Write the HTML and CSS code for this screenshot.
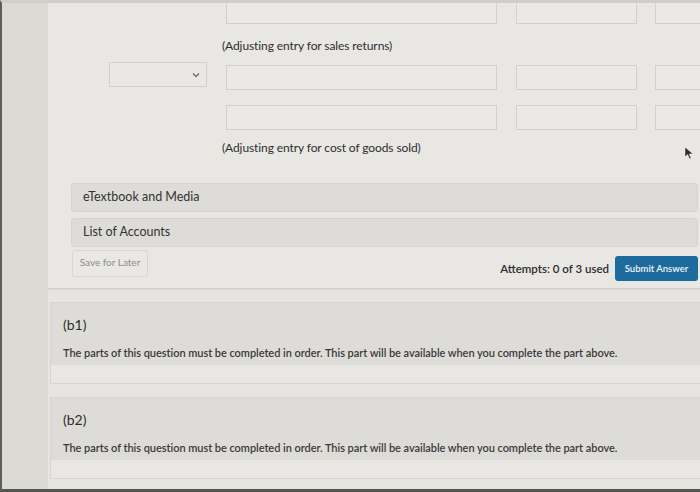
FILE: index.html
```html
<!DOCTYPE html>
<html lang="en">
<head>
<meta charset="utf-8">
<title>Question</title>
<link rel="stylesheet" href="styles.css">
</head>
<body>
<div class="screen">
  <div class="gutter"></div>
  <div class="main">
    <section class="question">
      <div class="journal">
        <div class="jrow first">
          <div class="slot"></div>
          <div class="field account"></div>
          <div class="field amount"></div>
          <div class="field amount"></div>
        </div>
        <div class="jlabel">(Adjusting entry for sales returns)</div>
        <div class="jrow r1">
          <div class="select"><svg class="chev" width="8" height="6" viewBox="0 0 8 6"><path d="M1 1.5 L4 4.5 L7 1.5" fill="none" stroke="#6b6b6b" stroke-width="1.3"/></svg></div>
          <div class="field account"></div>
          <div class="field amount"></div>
          <div class="field amount"></div>
        </div>
        <div class="jrow r2">
          <div class="slot"></div>
          <div class="field account"></div>
          <div class="field amount"></div>
          <div class="field amount"></div>
        </div>
        <div class="jlabel l2">(Adjusting entry for cost of goods sold)</div>
      </div>
      <div class="resource first-res">eTextbook and Media</div>
      <div class="resource">List of Accounts</div>
      <div class="actions">
        <button class="save">Save for Later</button>
        <div class="submit-group">
          <span class="attempts">Attempts: 0 of 3 used</span>
          <button class="submit">Submit Answer</button>
        </div>
      </div>
    </section>

    <section class="part">
      <div class="part-head">
        <div class="part-title">(b1)</div>
        <div class="part-note">The parts of this question must be completed in order. This part will be available when you complete the part above.</div>
      </div>
      <div class="part-foot"></div>
    </section>

    <section class="part">
      <div class="part-head">
        <div class="part-title">(b2)</div>
        <div class="part-note">The parts of this question must be completed in order. This part will be available when you complete the part above.</div>
      </div>
      <div class="part-foot"></div>
    </section>
  </div>
  <svg class="cursor" width="11" height="14" viewBox="0 0 11 14"><path d="M1 1 L1 11 L3.6 8.6 L5.6 13 L7.2 12.3 L5.3 8 L9 8 Z" fill="#2a2a2a" stroke="#f0f0f0" stroke-width="0.6"/></svg>
</div>
</body>
</html>
```

FILE: styles.css
```css
* { box-sizing: border-box; }

html, body {
  margin: 0;
  padding: 0;
  background: #dcdad5;
}

body {
  font-family: Lato, "Open Sans", "Liberation Sans", sans-serif;
  color: #333;
}

.screen {
  position: relative;
  width: 700px;
  height: 492px;
  overflow: hidden;
  display: flex;
  border-left: 2px solid #5d5d58;
  border-top: 3px solid #d0cec9;
  border-bottom: 3px solid #55554f;
  background: #dfddd8;
}

.gutter {
  width: 46px;
  flex: none;
  background: #dcdad5;
}

.main {
  flex: 1;
  display: flex;
  flex-direction: column;
  min-width: 0;
  background: #e6e5e1;
}

.question {
  background: #e8e7e3;
  padding: 0 2px 7px 23px;
  border-bottom: 1px solid #d2d0cb;
  box-shadow: 0 1px 1px rgba(0,0,0,0.05);
}

.journal {
  padding-left: 38px;
  display: flex;
  flex-direction: column;
  overflow: hidden;
  margin-right: -2px;
}

.jrow {
  display: flex;
  height: 25px;
  gap: 19px;
  flex: none;
}

.jrow.first { margin-top: -4px; }
.jrow.r1 { margin-top: 11px; }
.jrow.r2 { margin-top: 15px; }

.slot, .select {
  width: 98px;
  flex: none;
}

.select {
  border: 1px solid #d3d1cc;
  background: #e9e8e4;
  display: flex;
  align-items: center;
  justify-content: flex-end;
  padding-right: 6px;
  margin-top: -3px;
  height: 25px;
}

.field {
  flex: none;
  border: 1px solid #d3d1cc;
  background: #eae9e5;
  height: 25px;
}

.field.account { width: 271px; }
.field.amount { width: 121px; }
.field.amount + .field.amount { margin-left: -1px; }

.jlabel {
  margin-top: 14px;
  padding-left: 113px;
  font-size: 12px;
  line-height: 16px;
  color: #2e2e2e;
  letter-spacing: -0.1px;
}

.jlabel.l2 { margin-top: 10px; }

.resource {
  height: 29px;
  background: #dedcd8;
  border: 1px solid #d6d4cf;
  border-radius: 3px;
  padding: 0 0 2px 11px;
  display: flex;
  align-items: center;
  font-size: 12.5px;
  color: #333;
  margin-top: 6px;
}

.resource.first-res { margin-top: 27px; }

.actions {
  display: flex;
  align-items: flex-start;
  justify-content: space-between;
  margin-top: 3px;
}

.save {
  font-family: inherit;
  width: 76px;
  height: 27px;
  background: #e9e8e4;
  border: 1px solid #d8d6d1;
  border-radius: 3px;
  color: #8f8f8b;
  font-size: 10px;
  padding: 0 0 4px 0;
  margin-left: 1px;
}

.submit-group {
  display: flex;
  align-items: center;
  gap: 6px;
  margin-top: 6px;
}

.attempts {
  font-size: 11.5px;
  color: #2c2c2c;
  font-weight: 600;
}

.submit {
  font-family: inherit;
  width: 83px;
  height: 25px;
  background: #1c6b9c;
  color: #f2f6f8;
  border: none;
  border-radius: 3px;
  font-size: 9.5px;
  font-weight: 600;
  padding: 0;
}

.part {
  margin: 13px 0 0 2px;
  border: 1px solid #d7d5d0;
  border-right: none;
  background: #e8e7e3;
}

.part + .part { margin-top: 13px; }

.part-head {
  background: #dedcd8;
  padding: 13px 12px 6px;
  height: 62px;
}

.part-title {
  font-size: 14px;
  line-height: 18px;
  color: #2e2e2e;
}

.part-note {
  margin-top: 12px;
  font-size: 11px;
  line-height: 14px;
  color: #3a3a3a;
  font-weight: 600;
  letter-spacing: -0.05px;
}

.part-foot {
  height: 18px;
}

.cursor {
  position: absolute;
  left: 682px;
  top: 143px;
}
```
